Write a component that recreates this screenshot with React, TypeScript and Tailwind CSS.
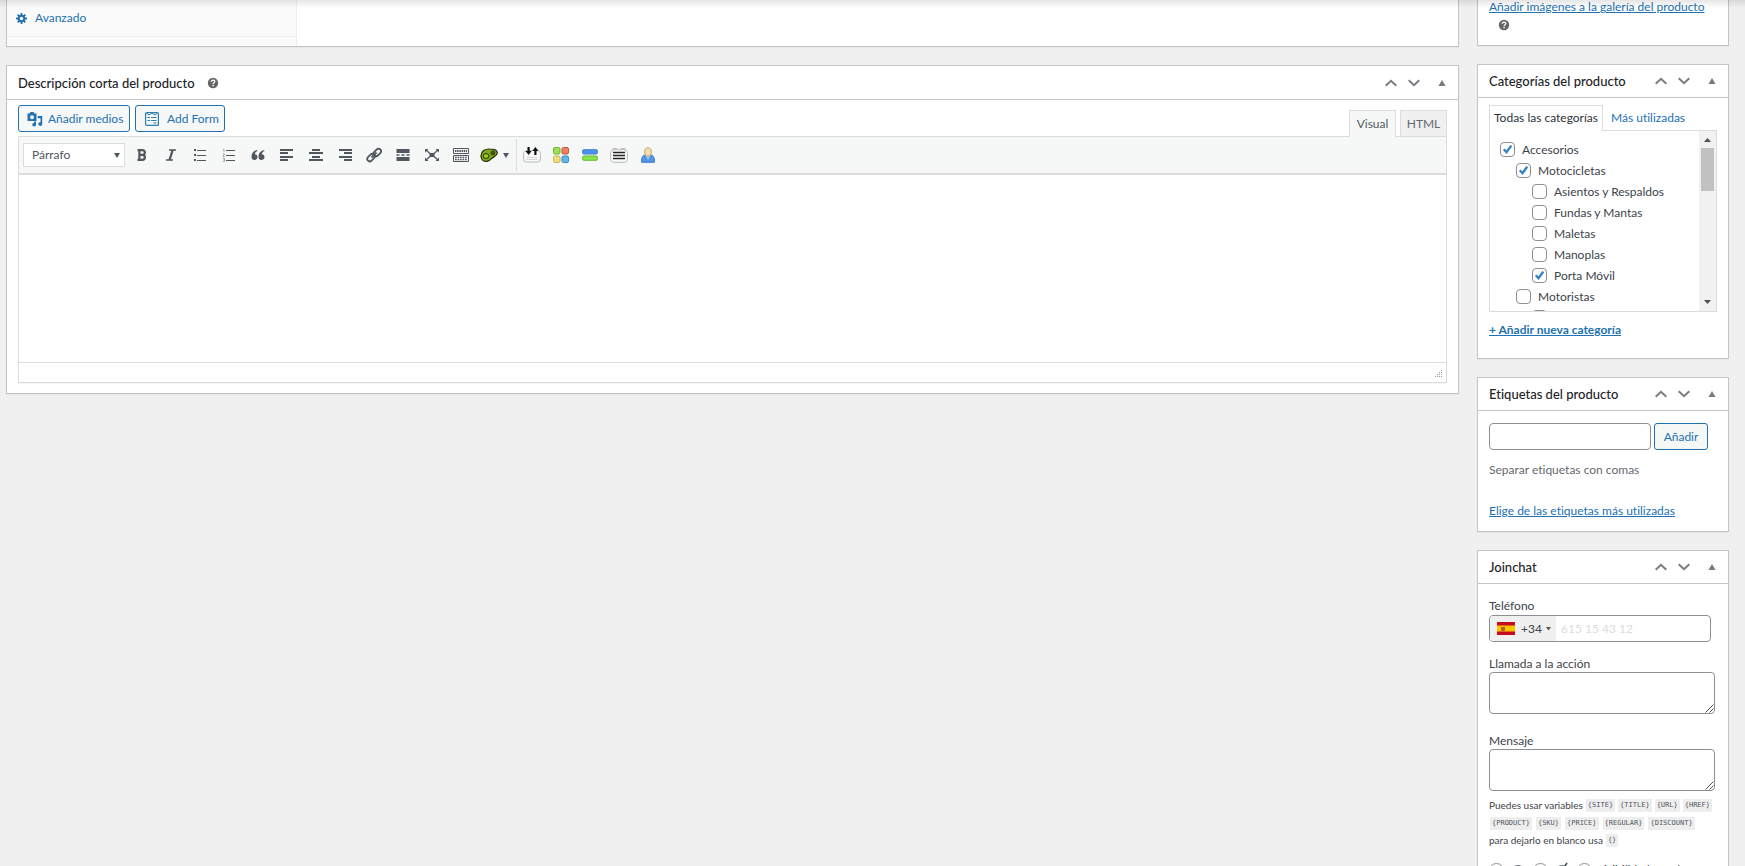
import { useState } from "react";
import type { ReactNode } from "react";

const categories = [
    { id: "accesorios", name: "Accesorios", level: 0, checked: true },
    { id: "motocicletas", name: "Motocicletas", level: 1, checked: true },
    { id: "asientos", name: "Asientos y Respaldos", level: 2, checked: false },
    { id: "fundas", name: "Fundas y Mantas", level: 2, checked: false },
    { id: "maletas", name: "Maletas", level: 2, checked: false },
    { id: "manoplas", name: "Manoplas", level: 2, checked: false },
    { id: "porta-movil", name: "Porta Móvil", level: 2, checked: true },
    { id: "motoristas", name: "Motoristas", level: 1, checked: false },
    { id: "motoristas-sub", name: "", level: 2, checked: false },
];

const indents = ["pl-0", "pl-4", "pl-8"];

const variablesFirst = ["{SITE}", "{TITLE}", "{URL}", "{HREF}"];
const variablesSecond = ["{PRODUCT}", "{SKU}", "{PRICE}", "{REGULAR}", "{DISCOUNT}"];

function HelpTip() {
    return (
        <svg viewBox="0 0 12 12" className="size-3 shrink-0" role="img" aria-label="Ayuda">
            <circle cx="6" cy="6" r="5.2" fill="#666" />
            <path d="M4.3 4.8C4.3 3.6 5 3.1 6 3.1s1.8.6 1.8 1.5C7.8 5.7 6.1 5.7 6.1 7" fill="none" stroke="#fff" strokeWidth="1.3" />
            <rect x="5.4" y="7.8" width="1.4" height="1.4" fill="#fff" />
        </svg>
    );
}

function HandleActions() {
    return (
        <div className="flex items-center">
            <button type="button" aria-label="Mover arriba" className="w-[23px] flex justify-center">
                <svg viewBox="0 0 12 8" width="12" height="8" fill="none" stroke="#787c82" strokeWidth="2">
                    <path d="M.7 6.8 6 1.8l5.3 5" />
                </svg>
            </button>
            <button type="button" aria-label="Mover abajo" className="w-6 pr-px flex justify-center">
                <svg viewBox="0 0 12 8" width="12" height="8" fill="none" stroke="#787c82" strokeWidth="2">
                    <path d="M.7 1.2 6 6.2l5.3-5" />
                </svg>
            </button>
            <button type="button" aria-label="Alternar panel" className="w-8 flex justify-center">
                <svg viewBox="0 0 8 6" width="8" height="6" fill="#787c82">
                    <path d="M4 0 7.600 6H.4z" />
                </svg>
            </button>
        </div>
    );
}

function Postbox({ title, tall, help, children }: { title: string; tall?: boolean; help?: boolean; children: ReactNode }) {
    return (
        <section className="bg-white border border-[#c3c4c7] shadow-[0_1px_1px_rgba(0,0,0,0.04)]">
            <div className={`flex items-center justify-between border-b border-[#c3c4c7] pl-[11px] ${tall ? "h-[34px]" : "h-[33px]"}`}>
                <h2 className="text-[13px] leading-5 font-medium text-[#1d2327] flex items-center gap-3">
                    {title}
                    {help && <HelpTip />}
                </h2>
                <HandleActions />
            </div>
            {children}
        </section>
    );
}

function Lines({ d }: { d: string }) {
    return (
        <svg viewBox="0 0 14 14" width="14" height="14" fill="none" stroke="#50575e" strokeWidth="2" aria-hidden="true">
            <path d={d} />
        </svg>
    );
}

function BoldIcon() {
    return (
        <svg viewBox="0 0 14 14" width="14" height="14" fill="none" stroke="#50575e" strokeWidth="2.2" aria-hidden="true">
            <path d="M2.5 2.1h5a2.3 2.3 0 0 1 0 4.7H4.1h3.700a2.600 2.600 0 0 1 0 5.100H2.500M4.400 2v10" />
        </svg>
    );
}

function ItalicIcon() {
    return (
        <svg viewBox="0 0 14 14" width="14" height="14" fill="none" stroke="#50575e" aria-hidden="true">
            <path d="M5 2h7M2 12h7" strokeWidth="1.600" />
            <path d="M8.700 2 5.500 12" strokeWidth="2.300" />
        </svg>
    );
}

function BulletIcon() {
    return (
        <svg viewBox="0 0 14 14" width="14" height="14" fill="#50575e" aria-hidden="true">
            <rect x="1" y="1" width="2" height="2" />
            <rect x="1" y="6" width="2" height="2" />
            <rect x="1" y="11" width="2" height="2" />
            <rect x="4" y="2" width="9" height="1" />
            <rect x="4" y="7" width="9" height="1" />
            <rect x="4" y="12" width="9" height="1" />
        </svg>
    );
}

function NumberIcon() {
    return (
        <svg viewBox="0 0 14 14" width="14" height="14" aria-hidden="true">
            <path d="M1 1.500h1V4M1 6h1.500L1 8.500h1.700M1 10.500h1.500v3H1M1.500 12h1" fill="none" stroke="#8c8f94" strokeWidth=".8" />
            <path d="M4 2.500h9M4 7.500h9M4 12.500h9" stroke="#50575e" />
        </svg>
    );
}

function QuoteIcon() {
    return (
        <svg viewBox="0 0 14 14" width="14" height="14" fill="#50575e" aria-hidden="true">
            <path d="M6 2C2.500 2.800.5 5.200.5 8.700.5 10.800 1.700 12 3.500 12s3-1.200 3-2.900S5.400 6.300 3.800 6.300C4 4.800 4.900 3.700 6.500 3.100z" />
            <path d="M13 2C9.500 2.800 7.500 5.200 7.500 8.700c0 2.100 1.200 3.300 3 3.300s3-1.200 3-2.900-1.100-2.800-2.700-2.800c.2-1.500 1.100-2.600 2.700-3.200z" />
        </svg>
    );
}

function LinkIcon() {
    return (
        <svg viewBox="0 0 16 16" width="16" height="16" fill="none" stroke="#50575e" strokeWidth="1.800" aria-hidden="true">
            <rect x="7" y="3" width="8.500" height="5" rx="2.500" transform="rotate(-45 11.250 5.500)" />
            <rect x="0.800" y="8.200" width="8.500" height="5" rx="2.500" transform="rotate(-45 5 10.700)" />
            <path d="m5.500 10.500 5-5" />
        </svg>
    );
}

function MoreIcon() {
    return (
        <svg viewBox="0 0 14 14" width="14" height="14" fill="#50575e" aria-hidden="true">
            <path d="M.5 1h13v4H.5zM.5 9h13v4H.5zM.5 6.300h3v1.400h-3zM5.500 6.300h3v1.400h-3zM10.500 6.300h3v1.400h-3z" />
        </svg>
    );
}

function FullscreenIcon() {
    return (
        <svg viewBox="0 0 16 14" width="16" height="14" fill="#50575e" aria-hidden="true">
            <path d="M1 1h3.500L1 4.500zM15 1v3.500L11.500 1zM1 13V9.500L4.500 13zM15 13h-3.500L15 9.500zM5.500 5h5v4h-5z" />
            <path d="m2 2 4 3.500M14 2l-4 3.500M2 12l4-3.500M14 12l-4-3.500" fill="none" stroke="#50575e" strokeWidth="1.300" />
        </svg>
    );
}

function KitchenSinkIcon() {
    return (
        <svg viewBox="0 0 16 14" width="16" height="14" fill="none" stroke="#50575e" aria-hidden="true">
            <path d="M.5.500h15v5H.5zM.5 7.500h15v6H.5z" />
            <path d="M2 3h12" strokeWidth="2" strokeDasharray="1.500 .7" />
            <path d="M2 9.500h12M2 11.700h12" strokeWidth="1.300" strokeDasharray="1.700 .8" />
        </svg>
    );
}

function ParrotIcon() {
    return (
        <svg viewBox="0 0 18 14" width="18" height="14" aria-hidden="true">
            <path d="M1 7.500C1.200 3 5 .8 9.500 1c4.500 0 8 1 7.800 4-.2 3-3.300 3.500-5.300 5.200-1.500 1.700-3.200 3.300-6 3.300S.8 11.200 1 7.500z" fill="#7fa81b" stroke="#26330a" strokeWidth="1.200" />
            <ellipse cx="6" cy="8" rx="3" ry="2.400" fill="#a3c51c" stroke="#26330a" strokeWidth="1" />
            <circle cx="12.800" cy="5" r="1.900" fill="#5f8a14" stroke="#26330a" />
            <circle cx="13" cy="5" r=".7" fill="#111" />
        </svg>
    );
}

function ToggleIcon() {
    return (
        <svg viewBox="0 0 18 18" width="18" height="18" aria-hidden="true">
            <rect x=".6" y="4.500" width="16.800" height="11.500" rx="3" fill="#fafafa" stroke="#bbb" />
            <path d="M3.500 11.500h11M3.500 13.500h11" stroke="#d6d6d6" />
            <path d="M4.500 1h2.200v4h2L5.600 9 2.500 5h2zM11.300 9h2.200V5h2L12.400 1 9.300 5h2z" fill="#111" />
        </svg>
    );
}

function TabsIcon() {
    return (
        <svg viewBox="0 0 16 16" width="16" height="16" aria-hidden="true">
            <rect x=".5" y=".5" width="6.500" height="6.500" rx="1.500" fill="#9be05a" stroke="#69b52e" />
            <rect x="9" y=".5" width="6.500" height="6.500" rx="1.500" fill="#ee8061" stroke="#cb5136" />
            <rect x=".5" y="9" width="6.500" height="6.500" rx="1.500" fill="#efdc80" stroke="#cdb44b" />
            <rect x="9" y="9" width="6.500" height="6.500" rx="1.500" fill="#65b7ea" stroke="#318cc4" />
        </svg>
    );
}

function ButtonsIcon() {
    return (
        <svg viewBox="0 0 16 12" width="16" height="12" aria-hidden="true">
            <rect x=".5" y=".7" width="15" height="4.300" rx="1.500" fill="#4b92ec" stroke="#3f7fd2" />
            <rect x=".5" y="7" width="15" height="4.300" rx="1.500" fill="#8be54c" stroke="#64b932" />
        </svg>
    );
}

function DividerIcon() {
    return (
        <svg viewBox="0 0 18 16" width="18" height="16" aria-hidden="true">
            <path d="M3 3V1.500h4V3h4V1.500h4V3" fill="#eee" stroke="#bbb" />
            <rect x=".6" y="2.800" width="16.800" height="12.500" rx="3" fill="#fafafa" stroke="#bbb" />
            <path d="M3 5.500h12M3 8.500h12M3 11.500h12" stroke="#222" strokeWidth="1.300" />
        </svg>
    );
}

function AuthorIcon() {
    return (
        <svg viewBox="0 0 14 16" width="14" height="16" aria-hidden="true">
            <path d="M.7 15.300c-.5-3 .2-6.300 3-7.300h6.600c2.800 1 3.500 4.300 3 7.300z" fill="#5596e6" stroke="#3a78cc" />
            <path d="m5 9 2 4 2-4z" fill="#a8cbf7" />
            <ellipse cx="7" cy="5" rx="3.300" ry="4.200" fill="#f4dfb4" stroke="#c5a568" />
        </svg>
    );
}

const tools: { label: string; icon: ReactNode }[] = [
    { label: "Negrita", icon: <BoldIcon /> },
    { label: "Cursiva", icon: <ItalicIcon /> },
    { label: "Lista con viñetas", icon: <BulletIcon /> },
    { label: "Lista numerada", icon: <NumberIcon /> },
    { label: "Cita", icon: <QuoteIcon /> },
    { label: "Alinear a la izquierda", icon: <Lines d="M0 2h13M0 5h8M0 9h13M0 12h8" /> },
    { label: "Centrar", icon: <Lines d="M3 2h8M0 5h14M3 9h8M0 12h14" /> },
    { label: "Alinear a la derecha", icon: <Lines d="M1 2h13M6 5h8M1 9h13M6 12h8" /> },
    { label: "Insertar enlace", icon: <LinkIcon /> },
    { label: "Leer más", icon: <MoreIcon /> },
    { label: "Pantalla completa", icon: <FullscreenIcon /> },
    { label: "Barra de herramientas", icon: <KitchenSinkIcon /> },
];

const extras: { label: string; icon: ReactNode }[] = [
    { label: "Toggle", icon: <ToggleIcon /> },
    { label: "Pestañas", icon: <TabsIcon /> },
    { label: "Botones", icon: <ButtonsIcon /> },
    { label: "Divisor", icon: <DividerIcon /> },
    { label: "Autor", icon: <AuthorIcon /> },
];

function Editor() {
    return (
        <div className="px-[11px] pt-[5px] pb-[10px]">
            <div className="flex justify-between">
                <div className="flex items-start gap-[5px]">
                    <button type="button" className="h-[27px] w-28 flex items-center gap-[5px] pl-2 border border-[#2271b1] rounded-[3px] bg-[#f6f7f7] text-[#2271b1] text-xs whitespace-nowrap">
                        <svg viewBox="0 0 16 16" width="16" height="16" fill="#2271b1" aria-hidden="true">
                            <path fillRule="evenodd" d="M.5 2.500h2L3.500 1h3l1 1.500h2V10h-9zM5 4.200a2 2 0 1 0 0 4 2 2 0 0 0 0-4z" />
                            <path d="M10.700 5h4.500v8.200a2 1.800 0 1 1-1.700-1.900V7.200h-2.800zM7 10.500h2v3a1.900 1.700 0 1 1-2-1.500z" />
                        </svg>
                        Añadir medios
                    </button>
                    <button type="button" className="h-[27px] w-[90px] flex items-center gap-2 pl-[9px] border border-[#2271b1] rounded-[3px] bg-[#f6f7f7] text-[#2271b1] text-xs whitespace-nowrap">
                        <svg viewBox="0 0 14 14" width="14" height="14" fill="none" stroke="#2d7fae" aria-hidden="true">
                            <rect x=".6" y=".6" width="12.800" height="12.800" rx="1" strokeWidth="1.200" />
                            <path d="M1.500 1 4 3l3-2 3 2 2.500-2M2.500 5.500H5M6 5.500h5.500M2.500 8.500H5M6 8.500h5.500M8.500 11h3" />
                        </svg>
                        Add Form
                    </button>
                </div>
                <div className="flex gap-1 pt-[5px] -mb-px z-10">
                    <button type="button" className="h-[27px] w-[47px] border border-b-0 border-[#dcdcde] bg-[#f6f7f7] text-[#50575e] text-xs">Visual</button>
                    <button type="button" className="h-[26px] w-[47px] border border-b-0 border-[#dcdcde] bg-[#f0f0f1] text-[#646970] text-xs">HTML</button>
                </div>
            </div>
            <div className="border border-[#dcdcde] shadow-[0_1px_1px_rgba(0,0,0,0.04)]">
                <div className="h-[38px] pl-1 flex items-center bg-[#f6f7f7] border-b-2 border-[#dcdcde]">
                    <div className="relative">
                        <select aria-label="Formato" className="appearance-none block h-6 w-[102px] pl-2 bg-white border border-[#dcdcde] text-xs text-[#50575e]">
                            <option>Párrafo</option>
                        </select>
                        <svg viewBox="0 0 6 5" width="6" height="5" className="absolute right-[5px] top-[10px] pointer-events-none" fill="#50575e">
                            <path d="M0 0h6L3 5z" />
                        </svg>
                    </div>
                    <div className="flex pl-[2px]">
                        {tools.map((tool) => (
                            <button key={tool.label} type="button" aria-label={tool.label} className="w-[29px] h-6 flex items-center justify-center">
                                {tool.icon}
                            </button>
                        ))}
                    </div>
                    <button type="button" aria-label="Insertar shortcode" className="w-[41px] h-6 pl-[5px] flex items-center gap-[5px]">
                        <ParrotIcon />
                        <svg viewBox="0 0 6 5" width="6" height="5" fill="#50575e"><path d="M0 0h6L3 5z" /></svg>
                    </button>
                    <div className="flex items-center h-8 border-l border-[#dcdcde]">
                        {extras.map((tool) => (
                            <button key={tool.label} type="button" aria-label={tool.label} className="w-[29px] h-6 flex items-center justify-center">
                                {tool.icon}
                            </button>
                        ))}
                    </div>
                </div>
                <textarea aria-label="Descripción corta del producto" className="block w-full h-[187px] resize-none outline-none p-2 text-xs" />
                <div className="h-5 border-t border-[#dcdcde] flex items-end justify-end p-[3px]">
                    <svg viewBox="0 0 9 9" width="9" height="9" fill="#a8967c" aria-hidden="true">
                        <path d="M7 0h1v1H7zM5 2h1v1H5zM7 2h1v1H7zM3 4h1v1H3zM5 4h1v1H5zM7 4h1v1H7zM1 6h1v1H1zM3 6h1v1H3zM5 6h1v1H5zM7 6h1v1H7z" />
                    </svg>
                </div>
            </div>
        </div>
    );
}

function CategoryList() {
    const [checked, setChecked] = useState(categories.filter((c) => c.checked).map((c) => c.id));

    const toggle = (id: string) => {
        setChecked((prev) => (prev.includes(id) ? prev.filter((x) => x !== id) : [...prev, id]));
    };

    return (
        <div className="border border-[#dcdcde] h-[182px] flex">
            <ul className="flex-1 overflow-hidden pl-[10px] pt-2">
                {categories.map((category) => (
                    <li key={category.id} className={`h-[21px] ${indents[category.level]}`}>
                        <label className="flex items-center gap-[7px] h-[21px] text-xs">
                            <span className="relative block size-[15px] shrink-0">
                                <input
                                    type="checkbox"
                                    checked={checked.includes(category.id)}
                                    onChange={() => toggle(category.id)}
                                    className="peer appearance-none block size-[15px] bg-white border border-[#8c8f94] rounded-[4px]"
                                />
                                <svg viewBox="0 0 15 15" className="absolute inset-0 pointer-events-none hidden peer-checked:block" fill="none" stroke="#3582c4" strokeWidth="2.400">
                                    <path d="m3.800 7.200 2.700 3 4.800-6.600" />
                                </svg>
                            </span>
                            {category.name}
                        </label>
                    </li>
                ))}
            </ul>
            <div className="w-[17px] bg-[#f1f1f1] flex flex-col items-center" aria-hidden="true">
                <svg viewBox="0 0 17 17" width="17" height="17" fill="#505050"><path d="M5 11h7L8.500 7z" /></svg>
                <div className="w-[13px] h-[43px] bg-[#c1c1c1]" />
                <svg viewBox="0 0 17 17" width="17" height="17" fill="#505050" className="mt-auto"><path d="M5 6h7L8.500 10z" /></svg>
            </div>
        </div>
    );
}

function Categories() {
    return (
        <div className="px-[11px] pt-[7px] pb-[18px]">
            <div className="flex items-end -mb-px">
                <a href="#todas" className="h-[26px] w-[114px] px-1 bg-white border border-b-0 border-[#dcdcde] text-xs leading-6 text-[#2c3338] whitespace-nowrap relative">Todas las categorías</a>
                <a href="#mas" className="h-[26px] px-2 pt-px text-xs leading-6 text-[#2271b1] whitespace-nowrap">Más utilizadas</a>
            </div>
            <CategoryList />
            <a href="#nueva" className="inline-block mt-[9px] text-xs leading-[18px] font-bold text-[#2271b1] underline">+ Añadir nueva categoría</a>
        </div>
    );
}

function Tags() {
    return (
        <div className="px-[11px] pt-3 pb-[10px]">
            <div className="flex gap-[3px]">
                <input aria-label="Añadir nueva etiqueta" type="text" className="h-[27px] w-[162px] px-2 border border-[#8c8f94] rounded-[4px] bg-white text-xs" />
                <button type="button" className="h-[27px] w-[54px] border border-[#2271b1] rounded-[3px] bg-[#f6f7f7] text-[#2271b1] text-xs">Añadir</button>
            </div>
            <p className="mt-[11px] text-xs leading-[18px] text-[#646970]">Separar etiquetas con comas</p>
            <a href="#etiquetas" className="inline-block mt-[23px] text-xs leading-[18px] text-[#2271b1] underline">Elige de las etiquetas más utilizadas</a>
        </div>
    );
}

function Code({ children }: { children: ReactNode }) {
    return <code className="px-[2px] bg-[#eeeeef] font-['DejaVu_Sans_Mono',monospace] text-[7px] leading-[13px] text-[#50575e]">{children}</code>;
}

function Flag() {
    return (
        <svg viewBox="0 0 18 13" width="18" height="13" aria-hidden="true">
            <path d="M0 0h18v13H0z" fill="#c60b1e" />
            <path d="M0 3.500h18v6H0z" fill="#ffc400" />
            <path d="M4 5h4v3.500L6 9.500l-2-1z" fill="#b5622a" />
        </svg>
    );
}

function ResizeBox({ id, label }: { id: string; label: string }) {
    return (
        <>
            <label htmlFor={id} className="block text-xs leading-4">{label}</label>
            <div className="relative">
                <textarea id={id} className="block w-full h-[42px] px-2 border border-[#8c8f94] rounded-[4px] resize-none bg-white text-xs" />
                <svg viewBox="0 0 9 9" width="9" height="9" className="absolute right-px bottom-px pointer-events-none" stroke="#555">
                    <path d="M.5 8.500l8-8M4.500 8.500l4-4" />
                </svg>
            </div>
        </>
    );
}

function Eye({ hidden }: { hidden?: boolean }) {
    return (
        <svg viewBox="0 0 20 20" width="20" height="20" aria-hidden="true" fill="none" stroke="#3c434a" strokeWidth="1.500">
            <path d="M2 10.500C4 7.500 6.800 6 10 6s6 1.500 8 4.500c-2 3-4.800 4.500-8 4.500s-6-1.500-8-4.500z" />
            <circle cx="10" cy="10.500" r="2.500" fill="#3c434a" />
            {hidden && <path d="M5 17 15 3" />}
        </svg>
    );
}

const visibility: { value: string; label: string; content: ReactNode }[] = [
    { value: "yes", label: "Mostrar", content: <Eye /> },
    { value: "no", label: "Ocultar", content: <Eye hidden /> },
    { value: "default", label: "Visibilidad por defecto", content: "Visibilidad por defecto" },
];

function Joinchat() {
    return (
        <div className="pl-[11px] pr-[13px] pt-[13px] pb-4">
            <label htmlFor="telefono" className="block text-xs leading-[18px]">Teléfono</label>
            <div className="flex h-[27px] mr-1 border border-[#8c8f94] rounded-[4px] overflow-hidden">
                <button type="button" className="flex items-center w-[66px] pl-[7px] bg-[#f0f0f1] text-xs">
                    <Flag />
                    <span className="pl-[6px]">+34</span>
                    <svg viewBox="0 0 5 4" width="5" height="4" className="ml-1" fill="#555"><path d="M0 0h5L2.500 3.500z" /></svg>
                </button>
                <input id="telefono" type="tel" placeholder="615 15 43 12" className="w-0 flex-1 px-[5px] text-xs outline-none placeholder:text-[#dcdcde]" />
            </div>
            <div className="mt-[14px]">
                <ResizeBox id="llamada" label="Llamada a la acción" />
            </div>
            <div className="mt-[19px]">
                <ResizeBox id="mensaje" label="Mensaje" />
            </div>
            <div className="mt-[5px] text-[10px] leading-[18px] whitespace-nowrap">
                <div className="flex items-center gap-[3px]">
                    Puedes usar variables
                    {variablesFirst.map((v) => <Code key={v}>{v}</Code>)}
                </div>
                <div className="flex items-center gap-1 h-[18px] pl-px">
                    {variablesSecond.map((v) => <Code key={v}>{v}</Code>)}
                </div>
                <div className="flex items-center gap-[3px] h-4">
                    para dejarlo en blanco usa <Code>{"{}"}</Code>
                </div>
            </div>
            <div className="mt-3 flex items-center gap-[5px] text-xs leading-[18px] whitespace-nowrap">
                {visibility.map((option) => (
                    <label key={option.value} className="flex items-center gap-1">
                        <input type="radio" name="visibilidad" aria-label={option.label} className="appearance-none size-[15px] border border-[#8c8f94] rounded-full" />
                        {option.content}
                    </label>
                ))}
            </div>
        </div>
    );
}

export default function App() {
    return (
        <div className="h-screen overflow-hidden bg-[#f0f0f1] font-['Lato',sans-serif] [font-variant-ligatures:none] text-[#3c434a] relative">
            <div className="absolute inset-x-0 top-0 h-2 bg-linear-to-b from-black/10 to-transparent pointer-events-none z-20" />
            <div className="flex items-start gap-[18px] pl-[6px] pr-4">
                <main className="flex-1 min-w-0 flex flex-col gap-[18px]">
                    <section className="h-[47px] flex bg-white border border-t-0 border-[#c3c4c7] shadow-[0_1px_1px_rgba(0,0,0,0.04)]">
                        <div className="w-[290px] bg-[#fafafa] border-r border-[#eee]">
                            <a href="#avanzado" className="h-[37px] pl-[9px] flex items-center gap-2 border-b border-[#eee] text-xs text-[#2271b1]">
                                <svg viewBox="0 0 12 12" width="11" height="11" fill="none" stroke="#2271b1" aria-hidden="true">
                                    <circle cx="6" cy="6" r="3" strokeWidth="2.200" />
                                    <path d="M6 0v2.500M6 9.500V12M0 6h2.500M9.500 6H12M1.800 1.800l1.700 1.700M8.500 8.500l1.700 1.700M1.800 10.200l1.700-1.700M8.500 3.500l1.700-1.700" strokeWidth="2" />
                                </svg>
                                Avanzado
                            </a>
                        </div>
                    </section>
                    <Postbox title="Descripción corta del producto" tall help>
                        <Editor />
                    </Postbox>
                </main>
                <aside className="w-[252px] shrink-0 flex flex-col gap-[18px]">
                    <section className="h-[46px] px-[11px] bg-white border border-t-0 border-[#c3c4c7] shadow-[0_1px_1px_rgba(0,0,0,0.04)]">
                        <a href="#galeria" className="block h-[17px] text-xs leading-[14px] text-[#2271b1] underline whitespace-nowrap">Añadir imágenes a la galería del producto</a>
                        <div className="pl-[9px] pt-[2px]">
                            <HelpTip />
                        </div>
                    </section>
                    <Postbox title="Categorías del producto">
                        <Categories />
                    </Postbox>
                    <Postbox title="Etiquetas del producto">
                        <Tags />
                    </Postbox>
                    <Postbox title="Joinchat">
                        <Joinchat />
                    </Postbox>
                </aside>
            </div>
        </div>
    );
}
